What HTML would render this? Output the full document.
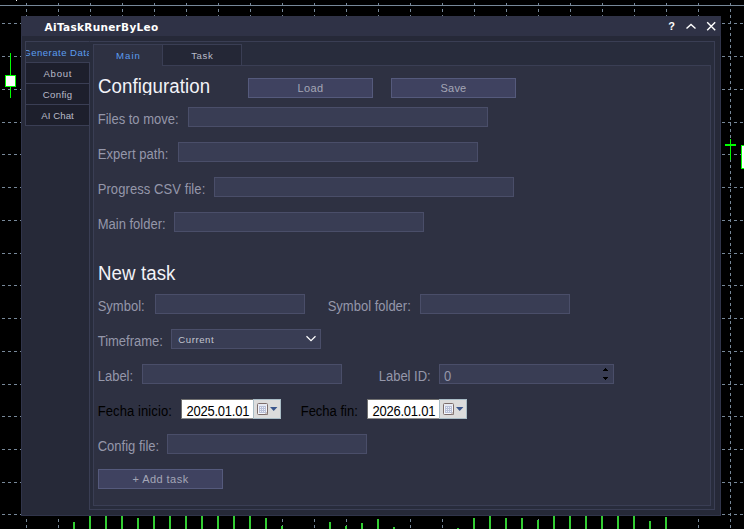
<!DOCTYPE html>
<html><head><meta charset="utf-8"><title>AiTaskRunerByLeo</title>
<style>
html,body{margin:0;padding:0;}
body{width:744px;height:529px;background:#000;position:relative;overflow:hidden;font-family:"Liberation Sans",Arial,sans-serif;}
.chart{position:absolute;left:0;top:0;}
.t{position:absolute;line-height:1;white-space:nowrap;}
.win{position:absolute;left:21px;top:16px;width:700px;height:500px;background:#262938;box-sizing:border-box;border:1px solid #30344a;border-top:none;}
.tbar{position:absolute;left:21px;top:16px;width:700px;height:20px;background:#2f3246;}
.title{font-family:"DejaVu Sans","Liberation Sans",sans-serif;font-weight:bold;color:#fff;letter-spacing:0.3px;}
.q{font-weight:bold;color:#fff;}
.ico{position:absolute;}
.outer{position:absolute;left:89px;top:41px;width:626px;height:469px;box-sizing:border-box;border:1px solid #3a3e54;background:#282c3c;}
.actbg{position:absolute;left:25px;top:41px;width:65px;height:22px;box-sizing:border-box;border:1px solid #3a3e54;border-right:none;border-bottom:none;background:#282c3c;}
.stab{position:absolute;left:25px;width:65px;height:22px;box-sizing:border-box;border:1px solid #3a3e54;background:#1d1f2c;}
.stab.act{background:#282c3c;border-right-color:#282c3c;border-bottom-color:#3a3e54;}
.clip{position:absolute;overflow:hidden;}
.tg{color:#b9bbc8;}
.tb{color:#5b9cf0;}
.panel{position:absolute;left:93px;top:65px;width:618px;height:441px;box-sizing:border-box;border:1px solid #3a3e54;background:#2e3142;}
.tab{position:absolute;top:44px;height:22px;box-sizing:border-box;border:1px solid #3a3e54;}
.tab.main{left:93px;width:70px;background:#2e3142;border-bottom:none;}
.tab.task{left:162px;width:80px;background:#242736;}
.h{color:#f3f3f8;letter-spacing:0.1px;}
.lab{color:#9597aa;}
.lab.blk{color:#000;}
.inp{position:absolute;box-sizing:border-box;background:#393d54;border:1px solid #4a4e69;}
.btn{position:absolute;box-sizing:border-box;background:#3f4260;border:1px solid #555a7c;}
.bt{color:#a4a6b6;}
.sel{color:#c3c5d0;}
.date{position:absolute;width:73px;height:20px;box-sizing:border-box;background:#fff;border:1px solid #6f6f6f;border-bottom-color:#8f8f8f;border-right:none;}
.dtxt{color:#000;}
.dbtn{position:absolute;width:28px;height:20px;box-sizing:border-box;background:#dcdcdc;border:1px solid #a9bcc6;}
.cal{position:absolute;left:-1px;top:-1px;}
</style></head><body>
<svg class="chart" width="744" height="529" viewBox="0 0 744 529" shape-rendering="crispEdges">
<rect x="0" y="5" width="744" height="1" fill="#778899"/>
<rect x="16" y="0" width="1" height="1" fill="#fff"/>
<g stroke="#778899" stroke-width="1" stroke-dasharray="3 3" fill="none">
<line x1="2" y1="23.5" x2="744" y2="23.5"/>
<line x1="2" y1="56.5" x2="744" y2="56.5"/>
<line x1="2" y1="89.5" x2="744" y2="89.5"/>
<line x1="2" y1="122.5" x2="744" y2="122.5"/>
<line x1="2" y1="154.5" x2="744" y2="154.5"/>
<line x1="2" y1="187.5" x2="744" y2="187.5"/>
<line x1="2" y1="220.5" x2="744" y2="220.5"/>
<line x1="2" y1="253.5" x2="744" y2="253.5"/>
<line x1="2" y1="285.5" x2="744" y2="285.5"/>
<line x1="2" y1="318.5" x2="744" y2="318.5"/>
<line x1="2" y1="351.5" x2="744" y2="351.5"/>
<line x1="2" y1="384.5" x2="744" y2="384.5"/>
<line x1="2" y1="416.5" x2="744" y2="416.5"/>
<line x1="2" y1="449.5" x2="744" y2="449.5"/>
<line x1="2" y1="482.5" x2="744" y2="482.5"/>
<line x1="2" y1="514.5" x2="744" y2="514.5"/>
<line x1="26.5" y1="3" x2="26.5" y2="529"/>
<line x1="58.5" y1="3" x2="58.5" y2="529"/>
<line x1="90.5" y1="3" x2="90.5" y2="529"/>
<line x1="122.5" y1="3" x2="122.5" y2="529"/>
<line x1="154.5" y1="3" x2="154.5" y2="529"/>
<line x1="186.5" y1="3" x2="186.5" y2="529"/>
<line x1="218.5" y1="3" x2="218.5" y2="529"/>
<line x1="250.5" y1="3" x2="250.5" y2="529"/>
<line x1="282.5" y1="3" x2="282.5" y2="529"/>
<line x1="314.5" y1="3" x2="314.5" y2="529"/>
<line x1="346.5" y1="3" x2="346.5" y2="529"/>
<line x1="378.5" y1="3" x2="378.5" y2="529"/>
<line x1="410.5" y1="3" x2="410.5" y2="529"/>
<line x1="442.5" y1="3" x2="442.5" y2="529"/>
<line x1="474.5" y1="3" x2="474.5" y2="529"/>
<line x1="506.5" y1="3" x2="506.5" y2="529"/>
<line x1="538.5" y1="3" x2="538.5" y2="529"/>
<line x1="570.5" y1="3" x2="570.5" y2="529"/>
<line x1="602.5" y1="3" x2="602.5" y2="529"/>
<line x1="634.5" y1="3" x2="634.5" y2="529"/>
<line x1="666.5" y1="3" x2="666.5" y2="529"/>
<line x1="698.5" y1="3" x2="698.5" y2="529"/>
<line x1="730.5" y1="3" x2="730.5" y2="529"/>
</g>
<g fill="#32cd32">
<rect x="73" y="522" width="2" height="7"/>
<rect x="89" y="516" width="2" height="13"/>
<rect x="105" y="516" width="2" height="13"/>
<rect x="121" y="516" width="2" height="13"/>
<rect x="137" y="518" width="2" height="11"/>
<rect x="153" y="516" width="2" height="13"/>
<rect x="169" y="516" width="2" height="13"/>
<rect x="185" y="516" width="2" height="13"/>
<rect x="201" y="516" width="2" height="13"/>
<rect x="217" y="516" width="2" height="13"/>
<rect x="233" y="516" width="2" height="13"/>
<rect x="249" y="516" width="2" height="13"/>
<rect x="265" y="518" width="2" height="11"/>
<rect x="281" y="526" width="2" height="3"/>
<rect x="329" y="522" width="2" height="7"/>
<rect x="345" y="526" width="2" height="3"/>
<rect x="361" y="523" width="2" height="6"/>
<rect x="377" y="519" width="2" height="10"/>
<rect x="393" y="527" width="2" height="2"/>
<rect x="457" y="528" width="2" height="1"/>
<rect x="473" y="518" width="2" height="11"/>
<rect x="489" y="516" width="2" height="13"/>
<rect x="505" y="518" width="2" height="11"/>
<rect x="521" y="518" width="2" height="11"/>
<rect x="537" y="520" width="2" height="9"/>
<rect x="553" y="516" width="2" height="13"/>
<rect x="569" y="516" width="2" height="13"/>
<rect x="585" y="516" width="2" height="13"/>
<rect x="601" y="516" width="2" height="13"/>
<rect x="617" y="516" width="2" height="13"/>
<rect x="633" y="516" width="2" height="13"/>
<rect x="649" y="521" width="2" height="8"/>
<rect x="665" y="517" width="2" height="12"/>
</g>
<rect x="10" y="53" width="1" height="45" fill="#00ff00"/>
<rect x="5.5" y="75.5" width="10" height="11" fill="#fff" stroke="#00ff00" stroke-width="1"/>
<rect x="730" y="139" width="1" height="21" fill="#00ff00"/>
<rect x="725" y="144" width="11" height="2" fill="#00ff00"/>
<rect x="741.5" y="145.5" width="10" height="23" fill="#fff" stroke="#00ff00" stroke-width="1"/>
</svg>
<div class="win"></div>
<div class="tbar"></div>
<div class="t title" style="left:44.6px;top:22.11px;font-size:10.5px;">AiTaskRunerByLeo</div>
<div class="t q" style="left:668.3px;top:21.29px;font-size:11px;">?</div>
<svg class="ico" style="left:684px;top:20px" width="14" height="12" viewBox="0 0 14 12"><path d="M2.5 8.6L7 4.4L11.5 8.6" fill="none" stroke="#fff" stroke-width="1.4"/></svg>
<svg class="ico" style="left:705px;top:20px" width="12" height="12" viewBox="0 0 12 12"><path d="M2.2 2.2L10.2 10.2M10.2 2.2L2.2 10.2" fill="none" stroke="#fff" stroke-width="1.4"/></svg>
<div class="outer"></div>
<div class="stab act" style="top:41px"></div><div class="clip" style="left:26px;top:41px;width:63px;height:22px"><div style="position:absolute;left:-26px;top:-41px"><div class="t tb" style="left:15px;width:85px;text-align:center;text-indent:0.46px;top:48px;font-size:9.6px;letter-spacing:0.46px;">Generate Data</div></div></div>
<div class="stab" style="top:62px"></div><div class="t tg" style="left:15px;width:85px;text-align:center;text-indent:0.75px;top:69px;font-size:9.6px;letter-spacing:0.75px;">About</div>
<div class="stab" style="top:83px"></div><div class="t tg" style="left:15px;width:85px;text-align:center;text-indent:0.32px;top:90px;font-size:9.6px;letter-spacing:0.32px;">Config</div>
<div class="stab" style="top:104px"></div><div class="t tg" style="left:15px;width:85px;text-align:center;text-indent:0.1px;top:111px;font-size:9.6px;letter-spacing:0.1px;">AI Chat</div>
<div class="panel"></div>
<div class="tab task"></div>
<div class="tab main"></div>
<div class="t tb" style="left:93px;width:70px;text-align:center;text-indent:1.0px;top:51px;font-size:9.6px;letter-spacing:1.0px;">Main</div>
<div class="t tg" style="left:162px;width:80px;text-align:center;text-indent:0.65px;top:51px;font-size:9.6px;letter-spacing:0.65px;">Task</div>
<div class="clip" style="left:94px;top:66px;width:150px;height:29px"><div class="t h" style="left:4px;top:12.20px;font-size:18.67px;transform:scaleY(1.045);transform-origin:0 15.80px;">Configuration</div></div>
<div class="btn" style="left:248px;top:78px;width:125px;height:20px"></div><div class="t bt" style="left:248px;width:125px;text-align:center;top:82.69px;font-size:11px;letter-spacing:0.4px;">Load</div>
<div class="btn" style="left:391px;top:78px;width:125px;height:20px"></div><div class="t bt" style="left:391px;width:125px;text-align:center;top:82.69px;font-size:11px;letter-spacing:0.2px;">Save</div>
<div class="t lab" style="left:97.7px;top:113.00px;font-size:13px;transform:scaleY(1.075);transform-origin:0 11.00px;">Files to move:</div><div class="inp" style="left:188px;top:107px;width:300px;height:20px"></div>
<div class="t lab" style="left:97.7px;top:148.00px;font-size:13px;transform:scaleY(1.075);transform-origin:0 11.00px;letter-spacing:0.05px;">Expert path:</div><div class="inp" style="left:178px;top:142px;width:300px;height:20px"></div>
<div class="t lab" style="left:97.7px;top:183.00px;font-size:13px;transform:scaleY(1.075);transform-origin:0 11.00px;letter-spacing:0.08px;">Progress CSV file:</div><div class="inp" style="left:214px;top:177px;width:300px;height:20px"></div>
<div class="t lab" style="left:97.7px;top:218.00px;font-size:13px;transform:scaleY(1.075);transform-origin:0 11.00px;">Main folder:</div><div class="inp" style="left:174px;top:212px;width:250px;height:20px"></div>
<div class="t h" style="left:98px;top:265.20px;font-size:18.67px;transform:scaleY(1.045);transform-origin:0 15.80px;">New task</div>
<div class="t lab" style="left:97.7px;top:300.00px;font-size:13px;transform:scaleY(1.075);transform-origin:0 11.00px;">Symbol:</div><div class="inp" style="left:155px;top:294px;width:150px;height:20px"></div>
<div class="t lab" style="left:327.7px;top:300.00px;font-size:13px;transform:scaleY(1.075);transform-origin:0 11.00px;">Symbol folder:</div><div class="inp" style="left:420px;top:294px;width:150px;height:20px"></div>
<div class="t lab" style="left:97.7px;top:335.00px;font-size:13px;transform:scaleY(1.075);transform-origin:0 11.00px;">Timeframe:</div><div class="inp" style="left:171px;top:329px;width:150px;height:20px"></div>
<div class="t sel" style="left:178.3px;top:335px;font-size:9.6px;letter-spacing:0.55px;">Current</div>
<svg class="ico" style="left:305px;top:335px" width="12" height="8" viewBox="0 0 12 8"><path d="M1.5 1.2L6 5.6L10.5 1.2" fill="none" stroke="#fff" stroke-width="1.25"/></svg>
<div class="t lab" style="left:97.7px;top:370.00px;font-size:13px;transform:scaleY(1.075);transform-origin:0 11.00px;">Label:</div><div class="inp" style="left:142px;top:364px;width:200px;height:20px"></div>
<div class="t lab" style="left:378.7px;top:370.00px;font-size:13px;transform:scaleY(1.075);transform-origin:0 11.00px;">Label ID:</div><div class="inp" style="left:439px;top:364px;width:175px;height:20px"></div>
<div class="t lab" style="left:444.0px;top:370.00px;font-size:13px;transform:scaleY(1.075);transform-origin:0 11.00px;">0</div>
<svg class="ico" style="left:602px;top:368px" width="8" height="12" viewBox="0 0 8 12" shape-rendering="crispEdges"><path d="M1 3h5v-1h-1v-1h-1v-1h-1v1h-1v1h-1z" fill="#000"/><path d="M1 9h5v1h-1v1h-1v1h-1v-1h-1v-1h-1z" fill="#000"/></svg>
<div class="t lab blk" style="left:97.7px;top:405.00px;font-size:13px;transform:scaleY(1.075);transform-origin:0 11.00px;letter-spacing:0.1px;">Fecha inicio:</div><div class="date" style="left:181px;top:399px"></div><div class="dbtn" style="left:253px;top:399px"><svg class="cal" width="28" height="20" viewBox="0 0 28 20"><rect x="4.5" y="4.5" width="10" height="11" rx="1" fill="#f4f6fb" stroke="#7d6d6b"/><rect x="5" y="5" width="9" height="2" fill="#e6e9f2"/><rect x="6" y="7" width="7" height="7" fill="#b9c0d8"/><g fill="#eef1f8"><rect x="7" y="8" width="1" height="1"/><rect x="9" y="8" width="1" height="1"/><rect x="11" y="8" width="1" height="1"/><rect x="7" y="10" width="1" height="1"/><rect x="9" y="10" width="1" height="1"/><rect x="11" y="10" width="1" height="1"/><rect x="7" y="12" width="1" height="1"/><rect x="9" y="12" width="1" height="1"/><rect x="11" y="12" width="1" height="1"/></g><path d="M12 15.5h2.5v-2.5z" fill="#fff" stroke="#7d6d6b" stroke-width="0.8"/><path d="M17 8h7.4l-3.7 3.9z" fill="#3b568c"/></svg></div><div class="t dtxt" style="left:186.4px;top:405.00px;font-size:13px;transform:scaleY(1.075);transform-origin:0 11.00px;letter-spacing:-0.22px;">2025.01.01</div>
<div class="t lab blk" style="left:300.7px;top:405.00px;font-size:13px;transform:scaleY(1.075);transform-origin:0 11.00px;">Fecha fin:</div><div class="date" style="left:367px;top:399px"></div><div class="dbtn" style="left:439px;top:399px"><svg class="cal" width="28" height="20" viewBox="0 0 28 20"><rect x="4.5" y="4.5" width="10" height="11" rx="1" fill="#f4f6fb" stroke="#7d6d6b"/><rect x="5" y="5" width="9" height="2" fill="#e6e9f2"/><rect x="6" y="7" width="7" height="7" fill="#b9c0d8"/><g fill="#eef1f8"><rect x="7" y="8" width="1" height="1"/><rect x="9" y="8" width="1" height="1"/><rect x="11" y="8" width="1" height="1"/><rect x="7" y="10" width="1" height="1"/><rect x="9" y="10" width="1" height="1"/><rect x="11" y="10" width="1" height="1"/><rect x="7" y="12" width="1" height="1"/><rect x="9" y="12" width="1" height="1"/><rect x="11" y="12" width="1" height="1"/></g><path d="M12 15.5h2.5v-2.5z" fill="#fff" stroke="#7d6d6b" stroke-width="0.8"/><path d="M17 8h7.4l-3.7 3.9z" fill="#3b568c"/></svg></div><div class="t dtxt" style="left:372.4px;top:405.00px;font-size:13px;transform:scaleY(1.075);transform-origin:0 11.00px;letter-spacing:-0.22px;">2026.01.01</div>
<div class="t lab" style="left:97.7px;top:440.00px;font-size:13px;transform:scaleY(1.075);transform-origin:0 11.00px;">Config file:</div><div class="inp" style="left:167px;top:434px;width:200px;height:20px"></div>
<div class="btn" style="left:98px;top:469px;width:125px;height:20px"></div><div class="t bt" style="left:98px;width:125px;text-align:center;top:473.69px;font-size:11px;letter-spacing:0.45px;">+ Add task</div>
</body></html>
